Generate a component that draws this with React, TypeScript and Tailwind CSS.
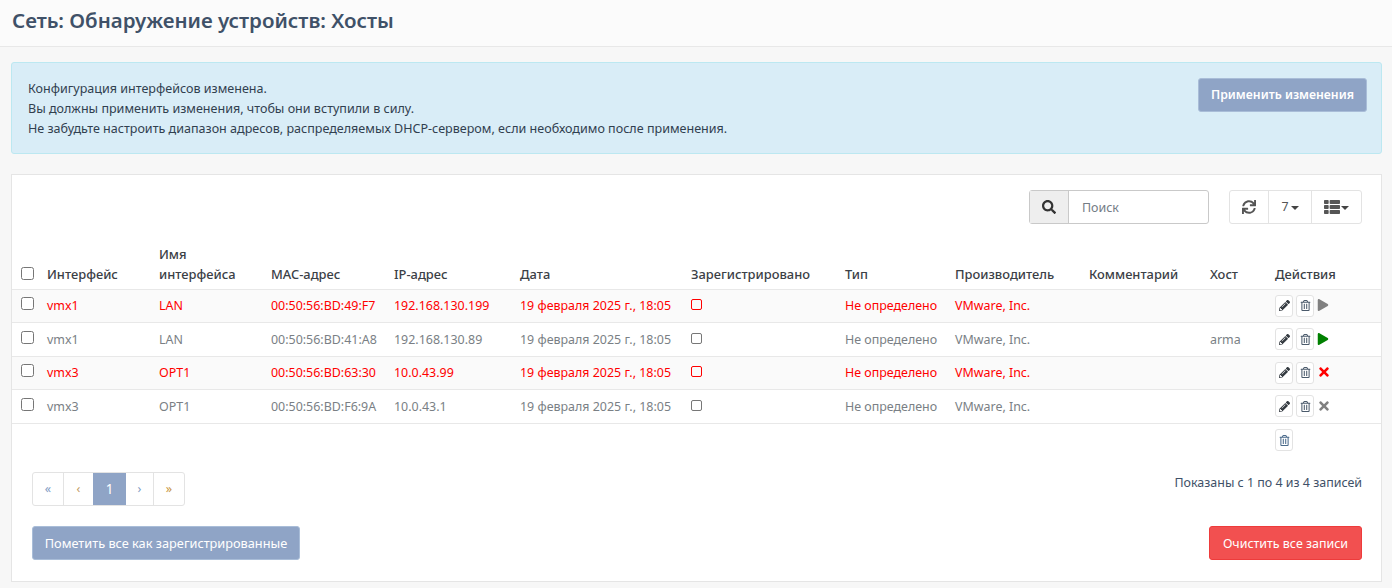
import { FaPencilAlt, FaRegTrashAlt, FaPlay, FaTimes, FaSearch, FaSync, FaThList } from "react-icons/fa"

const HOSTS = [
  { iface: "vmx1", name: "LAN", mac: "00:50:56:BD:49:F7", ip: "192.168.130.199", host: "", red: true, action: "play-grey" },
  { iface: "vmx1", name: "LAN", mac: "00:50:56:BD:41:A8", ip: "192.168.130.89", host: "arma", red: false, action: "play-green" },
  { iface: "vmx3", name: "OPT1", mac: "00:50:56:BD:63:30", ip: "10.0.43.99", host: "", red: true, action: "x-red" },
  { iface: "vmx3", name: "OPT1", mac: "00:50:56:BD:F6:9A", ip: "10.0.43.1", host: "", red: false, action: "x-grey" },
]

const HEADERS = [
  { label: "Интерфейс", width: "w-[112px]" },
  { label: "Имя интерфейса", width: "w-[112px]" },
  { label: "MAC-адрес", width: "w-[123px]" },
  { label: "IP-адрес", width: "w-[126px]" },
  { label: "Дата", width: "w-[171px]" },
  { label: "Зарегистрировано", width: "w-[154px]" },
  { label: "Тип", width: "w-[110px]" },
  { label: "Производитель", width: "w-[134px]" },
  { label: "Комментарий", width: "w-[121px]" },
  { label: "Хост", width: "w-[65px]" },
  { label: "Действия", width: "" },
]

function IconButton({ children }: { children: React.ReactNode }) {
  return (
    <span className="flex h-[22px] w-[18px] items-center justify-center rounded-[3px] border border-[#e3e3e3] bg-white">
      {children}
    </span>
  )
}

function ActionIcon({ action }: { action: string }) {
  if (action === "play-grey") return <FaPlay className="-mt-[1px] text-[12px] text-[#808080]" />
  if (action === "play-green") return <FaPlay className="-mt-[1px] text-[12px] text-[#008000]" />
  if (action === "x-red") return <FaTimes className="-mt-[1px] text-[14px] text-[#ff0000]" />
  return <FaTimes className="-mt-[1px] text-[14px] text-[#808080]" />
}

export default function App() {
  return (
    <div className="h-[588px] overflow-hidden bg-[#f7f7f7] font-['Noto_Sans',sans-serif] text-[12.45px] text-[#454b52]">
      <div className="flex h-[47px] items-center border-b border-[#e8e8e8] bg-[#fbfbfb] px-3 pb-[6px]">
        <h1 className="text-[20.5px] leading-none font-semibold text-[#3f5168]">Сеть: Обнаружение устройств: Хосты</h1>
      </div>

      <div className="mt-[15px] mr-[10px] ml-[11px] flex h-[92px] justify-between rounded-[3px] border border-[#bce8f1] bg-[#d9edf7] pr-[14px] pl-4">
        <div className="pt-4 text-[12.55px] leading-[20px] text-[#31404f]">
          <p>Конфигурация интерфейсов изменена.</p>
          <p>Вы должны применить изменения, чтобы они вступили в силу.</p>
          <p>Не забудьте настроить диапазон адресов, распределяемых DHCP-сервером, если необходимо после применения.</p>
        </div>
        <button className="mt-[15px] h-[34px] w-[169px] rounded-[3px] border border-[#a9bdd8] bg-[#8fa4c6] pt-[1px] text-[12.25px] font-semibold text-white">
          Применить изменения
        </button>
      </div>

      <div className="mt-5 mr-[10px] ml-[11px] h-[408px] border border-[#e5e5e5] bg-white">
        <div className="flex justify-end pt-[15px] pr-[19px]">
          <div className="flex h-[34px] w-[180px] rounded-[3px] border border-[#c9c9c9]">
            <span className="flex w-[39px] items-center justify-center border-r border-[#c9c9c9] bg-[#eeeeee] text-[#333333]">
              <FaSearch className="text-[14px]" />
            </span>
            <span className="flex flex-1 items-center pt-[2px] pl-[13px] text-[#747c85]">Поиск</span>
          </div>
          <div className="ml-5 flex h-[34px] w-[133px] rounded-[3px] border border-[#e3e3e3] text-[#555555]">
            <span className="flex w-[39px] items-center justify-center border-r border-[#e3e3e3]">
              <FaSync className="text-[14px]" />
            </span>
            <span className="flex w-[43px] items-center justify-center gap-[2px] border-r border-[#e3e3e3]">
              7<span className="mt-[1px] border-x-[4px] border-t-[4px] border-x-transparent border-t-[#444444]" />
            </span>
            <span className="flex flex-1 items-center justify-center gap-[1px]">
              <FaThList className="text-[16px]" />
              <span className="mt-[1px] border-x-[4px] border-t-[4px] border-x-transparent border-t-[#444444]" />
            </span>
          </div>
        </div>

        <table className="mt-[15px] w-full table-fixed border-collapse">
          <thead>
            <tr className="h-[50px] border-b border-[#e8e8e8] text-[12.9px] text-[#3b4046]">
              <th className="w-[35px] pb-[9px] pl-[9px] align-bottom font-normal">
                <input type="checkbox" className="block h-[13px] w-[13px]" />
              </th>
              {HEADERS.map((h) => (
                <th key={h.label} className={`${h.width} pr-2 pb-[5px] text-left align-bottom leading-[20px] font-medium`}>
                  {h.label}
                </th>
              ))}
            </tr>
          </thead>
          <tbody>
            {HOSTS.map((row) => {
              const color = row.red ? "text-[#ff0000]" : "text-[#7a7f85]"
              return (
                <tr key={row.mac} className={`h-[33.5px] border-b border-[#e8e8e8] ${row.red ? "bg-[#fafafa]" : "bg-white"} ${color}`}>
                  <td className="pb-1 pl-[9px]">
                    <input type="checkbox" className="block h-[13px] w-[13px]" />
                  </td>
                  <td className="pt-[2px]">{row.iface}</td>
                  <td className="pt-[2px]">{row.name}</td>
                  <td className="pt-[2px] whitespace-nowrap">{row.mac}</td>
                  <td className="pt-[2px]">{row.ip}</td>
                  <td className="pt-[2px] whitespace-nowrap">19 февраля 2025 г., 18:05</td>
                  <td>
                    <span className={`mb-[2px] block h-[11px] w-[11px] rounded-[2px] border ${row.red ? "border-[#ff0000]" : "border-[#777777]"}`} />
                  </td>
                  <td className="pt-[2px] whitespace-nowrap">Не определено</td>
                  <td className="pt-[2px] whitespace-nowrap">VMware, Inc.</td>
                  <td />
                  <td className="pt-[2px]">{row.host}</td>
                  <td>
                    <div className="flex items-center gap-[3px]">
                      <IconButton><FaPencilAlt className="text-[11px] text-[#343a40]" /></IconButton>
                      <IconButton><FaRegTrashAlt className="text-[11px] text-[#4a5a6b]" /></IconButton>
                      <ActionIcon action={row.action} />
                    </div>
                  </td>
                </tr>
              )
            })}
            <tr className="h-[34px]">
              <td colSpan={11} />
              <td>
                <IconButton><FaRegTrashAlt className="text-[11px] text-[#4a6a8b]" /></IconButton>
              </td>
            </tr>
          </tbody>
        </table>

        <div className="mt-[15px] flex items-start justify-between pr-[19px] pl-5">
          <div className="flex h-[34px] w-[153px] rounded-[3px] border border-[#e3e3e3] text-[#7f9cc4]">
            <span className="flex w-[31px] items-center justify-center border-r border-[#e3e3e3]">«</span>
            <span className="flex w-[29px] items-center justify-center text-[#c29a5f]">‹</span>
            <span className="flex w-[33px] items-center justify-center bg-[#8fa4c6] pt-[1px] text-[13.5px] text-white">1</span>
            <span className="flex w-[28px] items-center justify-center border-r border-[#e3e3e3]">›</span>
            <span className="flex flex-1 items-center justify-center text-[#c9963f]">»</span>
          </div>
          <span className="mt-[2px] text-[#3f5168]">Показаны с 1 по 4 из 4 записей</span>
        </div>

        <div className="mt-5 flex justify-between pr-[19px] pl-5">
          <button className="h-[34px] w-[268px] rounded-[3px] border border-[#a9bdd8] bg-[#8fa4c6] pt-[2px] text-[12.75px] text-white">
            Пометить все как зарегистрированные
          </button>
          <button className="h-[34px] w-[153px] rounded-[3px] border border-[#ee3b3b] bg-[#f25050] pt-[2px] text-white">
            Очистить все записи
          </button>
        </div>
      </div>
    </div>
  )
}
